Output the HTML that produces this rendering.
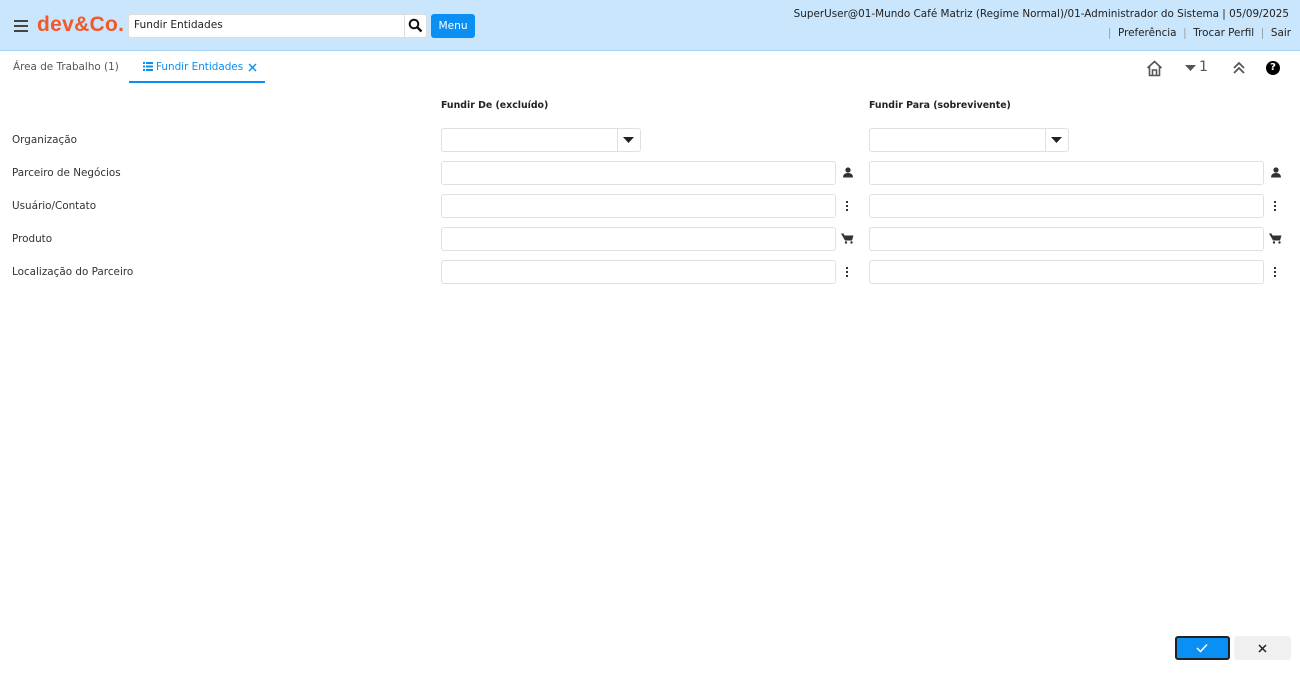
<!DOCTYPE html>
<html><head><meta charset="utf-8"><style>
*{box-sizing:border-box;margin:0;padding:0}
body{width:1300px;height:674px;position:relative;background:#fff;font-family:"DejaVu Sans","Liberation Sans",sans-serif;font-size:10.4px;color:#333;overflow:hidden}
.abs{position:absolute}
.hdr{left:0;top:0;width:1300px;height:51px;background:#c9e6fc;border-bottom:1px solid #a9d4f5}
.inp{position:absolute;border:1px solid #e0e0e0;border-radius:3px;background:#fff;height:24px}
.lbl{position:absolute;left:12px;font-size:10.4px;color:#333}
</style></head><body>
<div class="abs hdr"></div>
<div class="abs" style="left:14px;top:20px;width:14px;height:2px;background:#444;box-shadow:0 5px 0 #444,0 10px 0 #444"></div>
<div class="abs" style="left:37px;top:13px;font-family:'Liberation Sans',sans-serif;font-weight:bold;font-size:21px;color:#f4582a;letter-spacing:0.3px">dev&amp;Co.</div>
<div class="abs" style="left:128px;top:14px;width:299px;height:24px;background:#fff;border:1px solid #ddd;border-radius:3px"></div>
<div class="abs" style="left:134px;top:19px;font-size:10.6px;color:#222">Fundir Entidades</div>
<div class="abs" style="left:404px;top:14px;width:1px;height:24px;background:#ddd"></div>
<svg class="abs" style="left:408px;top:18px" width="15" height="15" viewBox="0 0 15 15"><circle cx="6" cy="6" r="4.3" stroke="#111" stroke-width="2" fill="none"/><path d="M9 9l4.5 4.5" stroke="#111" stroke-width="2.4"/></svg>
<div class="abs" style="left:431px;top:14px;width:44px;height:24px;background:#0a90f5;border-radius:3px;color:#fff;font-size:10.6px;text-align:center;line-height:24px">Menu</div>
<div class="abs" style="right:11px;top:8px;font-size:10.4px;color:#222">SuperUser@01-Mundo Café Matriz (Regime Normal)/01-Administrador do Sistema | 05/09/2025</div>
<div class="abs" style="right:9px;top:27px;font-size:10.4px;color:#222;white-space:nowrap"><span style="color:#999">|</span>&nbsp; Preferência &nbsp;<span style="color:#999">|</span>&nbsp; Trocar Perfil &nbsp;<span style="color:#999">|</span>&nbsp; Sair</div>
<div class="abs" style="left:13px;top:61px;font-size:10.4px;color:#555">Área de Trabalho (1)</div>
<svg class="abs" style="left:143px;top:62px" width="10" height="9"><g fill="#0a8ff0"><rect x="0" y="0" width="2" height="2"/><rect x="3" y="0" width="7" height="2"/><rect x="0" y="3.5" width="2" height="2"/><rect x="3" y="3.5" width="7" height="2"/><rect x="0" y="7" width="2" height="2"/><rect x="3" y="7" width="7" height="2"/></g></svg>
<div class="abs" style="left:156px;top:61px;font-size:10.4px;color:#0a8ff0">Fundir Entidades</div>
<svg class="abs" style="left:248px;top:63px" width="9" height="9"><path d="M1 1l7 7M8 1l-7 7" stroke="#0a8ff0" stroke-width="1.4"/></svg>
<div class="abs" style="left:129px;top:81px;width:136px;height:2px;background:#0a8ff0"></div>
<svg class="abs" style="left:1146px;top:60px" width="17" height="17" viewBox="0 0 17 17"><path d="M1.5 8L8.5 1.5 15.5 8M3.5 6.5V15.5H13.5V6.5M6.5 15.5V10H10.5V15.5" stroke="#555" stroke-width="1.6" fill="none"/></svg>
<svg class="abs" style="left:1185px;top:65px" width="11" height="7"><path d="M0 0h11L5.5 6z" fill="#555"/></svg>
<div class="abs" style="left:1199px;top:59px;font-size:14px;color:#555">1</div>
<svg class="abs" style="left:1232px;top:61px" width="14" height="14"><path d="M2 7l5-5 5 5M2 12l5-5 5 5" stroke="#555" stroke-width="1.8" fill="none"/></svg>
<div class="abs" style="left:1266px;top:61px;width:14px;height:14px;border-radius:50%;background:#000;color:#fff;font-weight:bold;font-size:10px;text-align:center;line-height:14px">?</div>

<div class="abs" style="left:441px;top:100px;font-weight:bold;font-size:9.4px;color:#222">Fundir De (excluído)</div>
<div class="abs" style="left:869px;top:100px;font-weight:bold;font-size:9.4px;color:#222">Fundir Para (sobrevivente)</div>

<div class="lbl" style="top:134px">Organização</div>
<div class="lbl" style="top:167px">Parceiro de Negócios</div>
<div class="lbl" style="top:200px">Usuário/Contato</div>
<div class="lbl" style="top:233px">Produto</div>
<div class="lbl" style="top:266px">Localização do Parceiro</div>

<div class="inp" style="left:441px;top:128px;width:200px"></div>
<div class="abs" style="left:617px;top:129px;width:1px;height:22px;background:#e0e0e0"></div>
<svg class="abs" style="left:623px;top:137px" width="11" height="6"><path d="M0 0h11L5.5 6z" fill="#222"/></svg>
<div class="inp" style="left:869px;top:128px;width:200px"></div>
<div class="abs" style="left:1045px;top:129px;width:1px;height:22px;background:#e0e0e0"></div>
<svg class="abs" style="left:1051px;top:137px" width="11" height="6"><path d="M0 0h11L5.5 6z" fill="#222"/></svg>

<div class="inp" style="left:441px;top:161px;width:395px"></div>
<div class="inp" style="left:869px;top:161px;width:395px"></div>
<div class="inp" style="left:441px;top:194px;width:395px"></div>
<div class="inp" style="left:869px;top:194px;width:395px"></div>
<div class="inp" style="left:441px;top:227px;width:395px"></div>
<div class="inp" style="left:869px;top:227px;width:395px"></div>
<div class="inp" style="left:441px;top:260px;width:395px"></div>
<div class="inp" style="left:869px;top:260px;width:395px"></div>

<svg class="abs" style="left:843px;top:167px" width="10" height="11"><circle cx="5" cy="3" r="2.6" fill="#333"/><path d="M0 10.5Q0 6 5 6Q10 6 10 10.5z" fill="#333"/></svg>
<svg class="abs" style="left:1271px;top:167px" width="10" height="11"><circle cx="5" cy="3" r="2.6" fill="#333"/><path d="M0 10.5Q0 6 5 6Q10 6 10 10.5z" fill="#333"/></svg>
<svg class="abs" style="left:846px;top:201px" width="3" height="11"><g fill="#333"><rect width="2" height="2"/><rect y="4" width="2" height="2"/><rect y="8" width="2" height="2"/></g></svg>
<svg class="abs" style="left:1274px;top:201px" width="3" height="11"><g fill="#333"><rect width="2" height="2"/><rect y="4" width="2" height="2"/><rect y="8" width="2" height="2"/></g></svg>
<svg class="abs" style="left:846px;top:267px" width="3" height="11"><g fill="#333"><rect width="2" height="2"/><rect y="4" width="2" height="2"/><rect y="8" width="2" height="2"/></g></svg>
<svg class="abs" style="left:1274px;top:267px" width="3" height="11"><g fill="#333"><rect width="2" height="2"/><rect y="4" width="2" height="2"/><rect y="8" width="2" height="2"/></g></svg>
<svg class="abs" style="left:841px;top:233px" width="13" height="11"><path d="M0 0.5h2.5l1 2h9l-1.5 5h-7z" fill="#333"/><circle cx="5" cy="9.5" r="1.2" fill="#333"/><circle cx="10.5" cy="9.5" r="1.2" fill="#333"/></svg>
<svg class="abs" style="left:1269px;top:233px" width="13" height="11"><path d="M0 0.5h2.5l1 2h9l-1.5 5h-7z" fill="#333"/><circle cx="5" cy="9.5" r="1.2" fill="#333"/><circle cx="10.5" cy="9.5" r="1.2" fill="#333"/></svg>

<div class="abs" style="left:1175px;top:636px;width:55px;height:24px;background:#0a90f5;border:2px solid #222;border-radius:3px"></div>
<svg class="abs" style="left:1196px;top:643px" width="12" height="10"><path d="M1 5l3.5 3.5L11 1.5" stroke="#fff" stroke-width="1.5" fill="none"/></svg>
<div class="abs" style="left:1234px;top:636px;width:57px;height:24px;background:#f0f0f0;border-radius:3px"></div>
<svg class="abs" style="left:1258px;top:644px" width="9" height="9"><path d="M1 1l7 7M8 1l-7 7" stroke="#222" stroke-width="1.5"/></svg>
</body></html>
